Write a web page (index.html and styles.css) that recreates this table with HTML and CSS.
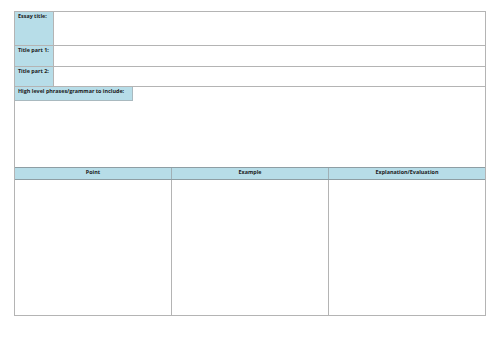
FILE: index.html
```html
<!DOCTYPE html>
<html>
<head>
<meta charset="utf-8">
<link rel="stylesheet" href="styles.css">
</head>
<body>
<div class="sheet">
  <div class="row r1"><div class="label">Essay title:</div><div class="fill"></div></div>
  <div class="row r2"><div class="label">Title part 1:</div><div class="fill"></div></div>
  <div class="row r3"><div class="label">Title part 2:</div><div class="fill"></div></div>
  <div class="row r4"><div class="hl">High level phrases/grammar to include:</div></div>
  <div class="cols head">
    <div class="hcell">Point</div>
    <div class="hcell">Example</div>
    <div class="hcell last">Explanation/Evaluation</div>
  </div>
  <div class="cols body">
    <div class="bcell"></div>
    <div class="bcell"></div>
    <div class="bcell last"></div>
  </div>
</div>
</body>
</html>
```

FILE: styles.css
```css
* { box-sizing: border-box; }
html, body { margin: 0; padding: 0; background: #ffffff; }
body {
  font-family: "Open Sans", "Liberation Sans", sans-serif;
  font-weight: 700;
  font-size: 5.4px;
  color: #1a1a1a;
}
.sheet {
  margin: 11px 0 0 14px;
  width: 472px;
  border: 1px solid #b4b4b4;
}
.row { display: flex; }
.r1 { height: 33px; }
.r2 { height: 21px; border-top: 1px solid #b4b4b4; }
.r3 { height: 20px; border-top: 1px solid #b4b4b4; }
.r4 { height: 81px; border-top: 1px solid #b4b4b4; align-items: flex-start; }
.label {
  width: 39px;
  background: #b7dde8;
  border-right: 1px solid #b4b4b4;
  padding: 1px 0 0 3px;
  line-height: 7px;
}
.fill { flex: 1; }
.hl {
  width: 118px;
  height: 14px;
  background: #b7dde8;
  border-right: 1px solid #a9b9bf;
  border-bottom: 1px solid #a9b9bf;
  padding: 1px 0 0 3px;
  line-height: 7px;
}
.cols {
  display: grid;
  grid-template-columns: 157px 157px 1fr;
}
.head {
  height: 13px;
  border-top: 1px solid #8e9ea4;
  border-bottom: 1px solid #8e9ea4;
  background: #b7dde8;
}
.hcell {
  border-right: 1px solid #a0b0b6;
  text-align: center;
  line-height: 9px;
}
.body { height: 135px; }
.bcell { border-right: 1px solid #b4b4b4; }
.last { border-right: none; }
```
